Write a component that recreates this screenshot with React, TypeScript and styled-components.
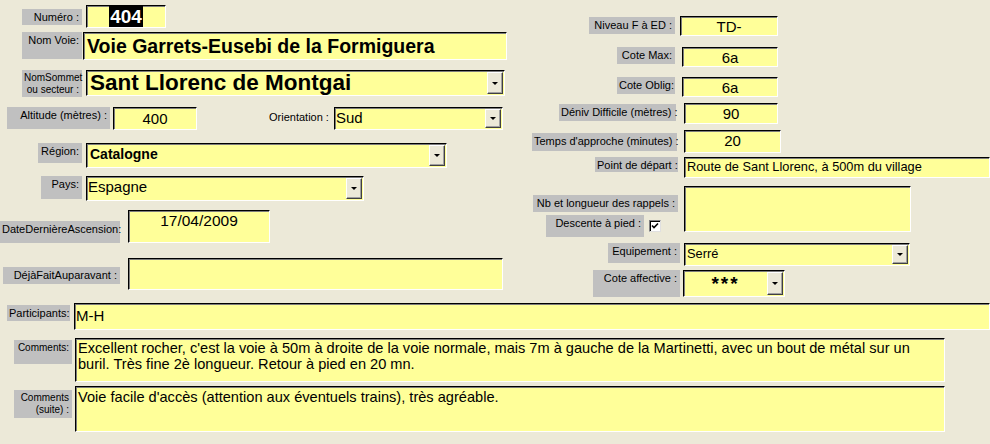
import styled, { createGlobalStyle } from "styled-components";

const GlobalStyle = createGlobalStyle`
  html, body {
    margin: 0;
    padding: 0;
    background: #ece9d8;
  }
  body {
    font-family: "Liberation Sans", Arial, sans-serif;
  }
`;

// Styled Components
const Form = styled.div`
  width: 990px;
  height: 444px;
  overflow: hidden;
  background: #ece9d8;
  color: #000;
`;

const Top = styled.div`
  display: flex;
  height: 297px;
`;

const Column = styled.div<{ $w?: number }>`
  display: flex;
  flex-direction: column;
  width: ${(p) => (p.$w ? `${p.$w}px` : "auto")};
  flex: ${(p) => (p.$w ? "none" : "1")};
`;

const Row = styled.div<{ $mt: number; $pl: number; $gap?: number }>`
  display: flex;
  align-items: flex-start;
  margin-top: ${(p) => p.$mt}px;
  padding-left: ${(p) => p.$pl}px;
  gap: ${(p) => p.$gap ?? 4}px;
`;

const Label = styled.div<{
  $w: number;
  $h: number;
  $dy?: number;
  $ml?: number;
  $plain?: boolean;
  $small?: boolean;
}>`
  box-sizing: border-box;
  flex: none;
  width: ${(p) => p.$w}px;
  height: ${(p) => p.$h}px;
  margin-top: ${(p) => p.$dy ?? 0}px;
  margin-left: ${(p) => p.$ml ?? 0}px;
  background: ${(p) => (p.$plain ? "transparent" : "#c0c0c0")};
  font-size: ${(p) => (p.$small ? 10 : 11)}px;
  line-height: ${(p) => (p.$small ? 12 : 13)}px;
  padding: 2px 3px 0 2px;
  text-align: right;
  white-space: nowrap;
`;

const Field = styled.div<{
  $w: number;
  $h: number;
  $dy?: number;
  $size?: number;
  $lh?: number;
  $bold?: boolean;
  $wrap?: boolean;
}>`
  box-sizing: border-box;
  flex: none;
  display: flex;
  align-items: flex-start;
  width: ${(p) => p.$w}px;
  height: ${(p) => p.$h}px;
  margin-top: ${(p) => p.$dy ?? 0}px;
  background: #ffff99;
  border-top: 1px solid #000;
  border-left: 1px solid #000;
  border-right: 1px solid #fff;
  border-bottom: 1px solid #fff;
  box-shadow: inset 1px 1px 0 #7d7d7d;
  font-size: ${(p) => p.$size ?? 14}px;
  font-weight: ${(p) => (p.$bold ? 700 : 400)};
  line-height: ${(p) => (p.$lh ? `${p.$lh}px` : "1.15")};
  overflow: hidden;
  white-space: ${(p) => (p.$wrap ? "normal" : "nowrap")};
`;

const Value = styled.div<{ $center?: boolean; $pt?: number; $pl?: number }>`
  flex: 1;
  min-width: 0;
  padding: ${(p) => p.$pt ?? 1}px 3px 0 ${(p) => p.$pl ?? 3}px;
  text-align: ${(p) => (p.$center ? "center" : "left")};
`;

const Selected = styled.span`
  background: #000;
  color: #fff;
  padding: 0 1px;
`;

const DropButton = styled.div`
  box-sizing: border-box;
  flex: none;
  align-self: stretch;
  width: 16px;
  margin: 1px 1px 1px 0;
  background: #ece9d8;
  border-top: 1px solid #fff;
  border-left: 1px solid #fff;
  border-right: 1px solid #404040;
  border-bottom: 1px solid #404040;
  box-shadow: inset -1px -1px 0 #a0a0a0;
  display: flex;
  align-items: center;
  justify-content: center;

  &::after {
    content: "";
    width: 0;
    height: 0;
    border-left: 3px solid transparent;
    border-right: 3px solid transparent;
    border-top: 3px solid #000;
  }
`;

const LabelStack = styled.div`
  display: flex;
  flex-direction: column;
  align-items: flex-end;
  width: 145px;
`;

const CheckRow = styled.div`
  display: flex;
  align-items: flex-start;
  gap: 5px;
  margin-top: 3px;
  padding-right: 17px;
`;

const CheckBox = styled.div`
  box-sizing: border-box;
  width: 12px;
  height: 12px;
  margin-top: 5px;
  background: #fff;
  border-top: 1px solid #808080;
  border-left: 1px solid #808080;
  border-right: 1px solid #e0e0e0;
  border-bottom: 1px solid #e0e0e0;
  box-shadow: inset 1px 1px 0 #000;
  display: flex;
  align-items: center;
  justify-content: center;
`;

const Stars = styled.span`
  font-size: 19px;
  font-weight: 700;
  letter-spacing: 2px;
  line-height: 20px;
`;

export default function App() {
  return (
    <Form>
      <GlobalStyle />
      <Top>
        <Column $w={520}>
          <Row $mt={5} $pl={22}>
            <Label $w={60} $h={16} $dy={4}>
              Numéro :
            </Label>
            <Field $w={80} $h={23} $size={19} $bold>
              <Value $center $pt={0}>
                <Selected>404</Selected>
              </Value>
            </Field>
          </Row>
          <Row $mt={4} $pl={22} $gap={1}>
            <Label $w={60} $h={27}>
              Nom Voie:
            </Label>
            <Field $w={424} $h={28} $size={19.5} $bold>
              <Value $pt={2}>Voie Garrets-Eusebi de la Formiguera</Value>
            </Field>
          </Row>
          <Row $mt={10} $pl={22}>
            <Label $w={60} $h={27} $small>
              NomSommet
              <br />
              ou secteur :
            </Label>
            <Field $w={419} $h={26} $size={22.5} $lh={24} $bold>
              <Value $pt={0}>Sant Llorenc de Montgai</Value>
              <DropButton />
            </Field>
          </Row>
          <Row $mt={10} $pl={7} $gap={3}>
            <Label $w={103} $h={22}>
              Altitude (mètres) :
            </Label>
            <Field $w={84} $h={23} $size={15}>
              <Value $center $pt={2}>
                400
              </Value>
            </Field>
            <Label $w={64} $h={20} $dy={2} $ml={67} $plain>
              Orientation :
            </Label>
            <Field $w={169} $h={23} $size={15}>
              <Value $pl={1} $pt={1}>
                Sud
              </Value>
              <DropButton />
            </Field>
          </Row>
          <Row $mt={13} $pl={38}>
            <Label $w={44} $h={20}>
              Région:
            </Label>
            <Field $w={361} $h={25} $bold>
              <Value $pt={2}>Catalogne</Value>
              <DropButton />
            </Field>
          </Row>
          <Row $mt={8} $pl={41}>
            <Label $w={41} $h={23}>
              Pays:
            </Label>
            <Field $w={278} $h={25} $size={15}>
              <Value $pl={1} $pt={1}>
                Espagne
              </Value>
              <DropButton />
            </Field>
          </Row>
          <Row $mt={9} $pl={0} $gap={8}>
            <Label $w={120} $h={22} $dy={11}>
              DateDernièreAscension:
            </Label>
            <Field $w={142} $h={33} $size={15.5}>
              <Value $center $pt={1}>
                17/04/2009
              </Value>
            </Field>
          </Row>
          <Row $mt={15} $pl={3} $gap={8}>
            <Label $w={117} $h={17} $dy={9}>
              DéjàFaitAuparavant :
            </Label>
            <Field $w={375} $h={32} />
          </Row>
        </Column>

        <Column>
          <Row $mt={16} $pl={69} $gap={5}>
            <Label $w={86} $h={17} $dy={1}>
              Niveau F à ED :
            </Label>
            <Field $w={98} $h={20} $size={15}>
              <Value $center $pt={1}>
                TD-
              </Value>
            </Field>
          </Row>
          <Row $mt={11} $pl={97} $gap={7}>
            <Label $w={58} $h={17}>
              Cote Max:
            </Label>
            <Field $w={96} $h={20} $size={15}>
              <Value $center $pt={1}>
                6a
              </Value>
            </Field>
          </Row>
          <Row $mt={10} $pl={97} $gap={7}>
            <Label $w={58} $h={17}>
              Cote Oblig:
            </Label>
            <Field $w={96} $h={20} $size={15}>
              <Value $center $pt={1}>
                6a
              </Value>
            </Field>
          </Row>
          <Row $mt={6} $pl={39} $gap={8}>
            <Label $w={117} $h={17} $dy={1}>
              Déniv Difficile (mètres) :
            </Label>
            <Field $w={94} $h={21} $size={15}>
              <Value $center $pt={1}>
                90
              </Value>
            </Field>
          </Row>
          <Row $mt={6} $pl={12} $gap={7}>
            <Label $w={145} $h={18} $dy={3}>
              Temps d'approche (minutes) :
            </Label>
            <Field $w={97} $h={23} $size={15}>
              <Value $center $pt={1}>
                20
              </Value>
            </Field>
          </Row>
          <Row $mt={4} $pl={75} $gap={6}>
            <Label $w={83} $h={15}>
              Point de départ :
            </Label>
            <Field $w={306} $h={21} $size={12.8}>
              <Value $pl={2} $pt={2}>
                Route de Sant Llorenc, à 500m du village
              </Value>
            </Field>
          </Row>
          <Row $mt={8} $pl={13} $gap={6}>
            <LabelStack>
              <Label $w={145} $h={17} $dy={9}>
                Nb et longueur des rappels :
              </Label>
              <CheckRow>
                <Label $w={98} $h={22}>
                  Descente à pied :
                </Label>
                <CheckBox>
                  <svg width="8" height="8" viewBox="0 0 8 8">
                    <path
                      d="M1 3.5 L3 5.5 L7 1.5"
                      fill="none"
                      stroke="#000"
                      strokeWidth="1.6"
                    />
                  </svg>
                </CheckBox>
              </CheckRow>
            </LabelStack>
            <Field $w={227} $h={46} />
          </Row>
          <Row $mt={6} $pl={88} $gap={4}>
            <Label $w={72} $h={20}>
              Equipement :
            </Label>
            <Field $w={226} $h={23} $size={12.8}>
              <Value $pl={2} $pt={3}>
                Serré
              </Value>
              <DropButton />
            </Field>
          </Row>
          <Row $mt={4} $pl={73} $gap={3}>
            <Label $w={87} $h={27}>
              Cote affective :
            </Label>
            <Field $w={102} $h={27}>
              <Value $center $pt={3}>
                <Stars>***</Stars>
              </Value>
              <DropButton />
            </Field>
          </Row>
        </Column>
      </Top>

      <Row $mt={6} $pl={7}>
        <Label $w={63} $h={16} $dy={2}>
          Participants:
        </Label>
        <Field $w={916} $h={27} $size={15}>
          <Value $pl={1} $pt={3}>
            M-H
          </Value>
        </Field>
      </Row>
      <Row $mt={8} $pl={14} $gap={3}>
        <Label $w={58} $h={24} $dy={2} $small>
          Comments:
        </Label>
        <Field $w={870} $h={44} $size={14.6} $lh={16} $wrap>
          <Value $pl={2} $pt={1}>
            Excellent rocher, c'est la voie à 50m à droite de la voie normale,
            mais 7m à gauche de la Martinetti, avec un bout de métal sur un
            <br />
            buril. Très fine 2è longueur. Retour à pied en 20 mn.
          </Value>
        </Field>
      </Row>
      <Row $mt={4} $pl={14} $gap={3}>
        <Label $w={58} $h={28} $dy={4} $small>
          Comments
          <br />
          (suite) :
        </Label>
        <Field $w={870} $h={46} $size={14.6} $lh={16} $wrap>
          <Value $pl={2} $pt={2}>
            Voie facile d'accès (attention aux éventuels trains), très
            agréable.
          </Value>
        </Field>
      </Row>
    </Form>
  );
}
